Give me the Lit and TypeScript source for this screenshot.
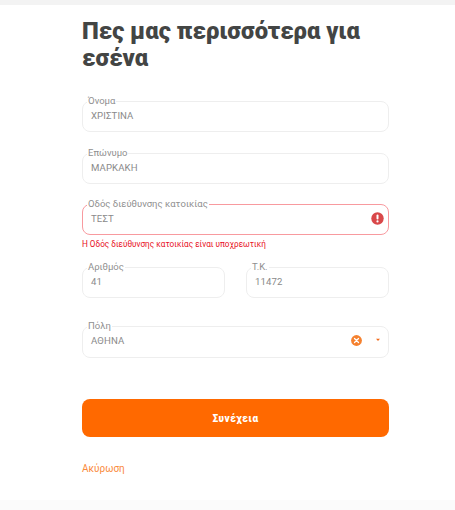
import { LitElement, html, css } from "lit";
import { customElement } from "lit/decorators.js";

@customElement("app-root")
export class AppRoot extends LitElement {
  static styles = css`
    :host {
      display: block;
      width: 455px;
      height: 510px;
      overflow: hidden;
      background: #fff;
      font-family: Roboto, "Noto Sans", sans-serif;
      color: #777;
    }
    .top { height: 5px; background: #f3f3f3; }
    .page {
      display: flex;
      flex-direction: column;
      width: 307px;
      margin-left: 82px;
      height: 495px;
    }
    h1 {
      margin: 13px 0 0;
      font-size: 23.8px;
      line-height: 27px;
      font-weight: 900;
      color: #434544;
    }
    fieldset {
      margin: 0;
      padding: 0 8px;
      border: 1px solid #eeeeee;
      border-radius: 8px;
      height: 36px;
      box-sizing: border-box;
      min-width: 0;
      display: block;
    }
    legend {
      padding: 0 1px;
      margin-left: -4px;
      font-size: 9.5px;
      line-height: 10px;
      color: #8f8f8f;
    }
    .row { display: flex; align-items: center; height: 24px; margin-top: -3px; }
    .val { flex: 1; font-size: 9.6px; color: #8a8a8a; letter-spacing: 0.1px; }
    .err fieldset { border-color: #f89a9f; }
    .msg { font-size: 8.2px; line-height: 11px; color: #e8101e; margin-top: 4px; }
    .f1 { margin-top: 24px; }
    .f2 { margin-top: 16px; }
    .f3 { margin-top: 15px; }
    .pair { display: grid; grid-template-columns: 143px 143px; justify-content: space-between; margin-top: 12px; }
    .f5 { margin-top: 23px; }
    fieldset.tall { height: 37px; }
    button {
      margin-top: 41px;
      height: 38px;
      border: 0;
      border-radius: 8px;
      background: #ff6900;
      color: #fff;
      font: 900 10px Roboto, sans-serif;
      letter-spacing: 0.55px;
    }
    a {
      margin-top: 26px;
      font-size: 10px;
      line-height: 12px;
      color: #fa8a3c;
      text-decoration: none;
    }
    .foot { height: 10px; background: #fbfbfb; margin-top: auto; }
    svg { display: block; flex: none; }
    .clear { margin-right: 13.5px; }
    .caret { margin-right: -1px; }
    .alert { margin-right: -4px; }
  `;

  field(label: string, value: string, cls = "", icons: unknown = null) {
    return html`<fieldset class=${cls}>
      <legend>${label}</legend>
      <div class="row"><span class="val">${value}</span>${icons}</div>
    </fieldset>`;
  }

  render() {
    const alert = html`<svg class="alert" width="13" height="13" viewBox="0 0 13 13">
      <circle cx="6.5" cy="6.5" r="6.2" fill="#d9484a"></circle>
      <rect x="5.5" y="2.6" width="2" height="5" rx="1" fill="#fff"></rect>
      <circle cx="6.5" cy="9.4" r="1.1" fill="#fff"></circle>
    </svg>`;
    const sel = html`<svg class="clear" width="11" height="11" viewBox="0 0 11 11">
        <circle cx="5.5" cy="5.5" r="5.4" fill="#f5812f"></circle>
        <path d="M3.5 3.5l4 4M7.5 3.5l-4 4" stroke="#fff" stroke-width="1.3" stroke-linecap="round"></path>
      </svg>
      <svg class="caret" width="6" height="4" viewBox="0 0 6 4"><path d="M1 0.8h4L3 3z" fill="#f26a1a"></path></svg>`;
    return html`
      <div class="top"></div>
      <div class="page">
        <h1>Πες μας περισσότερα για εσένα</h1>
        <div class="f1">${this.field("Όνομα", "ΧΡΙΣΤΙΝΑ")}</div>
        <div class="f2">${this.field("Επώνυμο", "ΜΑΡΚΑΚΗ")}</div>
        <div class="f3 err">
          ${this.field("Οδός διεύθυνσης κατοικίας", "ΤΕΣΤ", "", alert)}
          <div class="msg">Η Οδός διεύθυνσης κατοικίας είναι υποχρεωτική</div>
        </div>
        <div class="pair">
          ${this.field("Αριθμός", "41")}
          ${this.field("Τ.Κ.", "11472")}
        </div>
        <div class="f5">${this.field("Πόλη", "ΑΘΗΝΑ", "tall", sel)}</div>
        <button>Συνέχεια</button>
        <a href="#">Ακύρωση</a>
      </div>
      <div class="foot"></div>
    `;
  }
}
